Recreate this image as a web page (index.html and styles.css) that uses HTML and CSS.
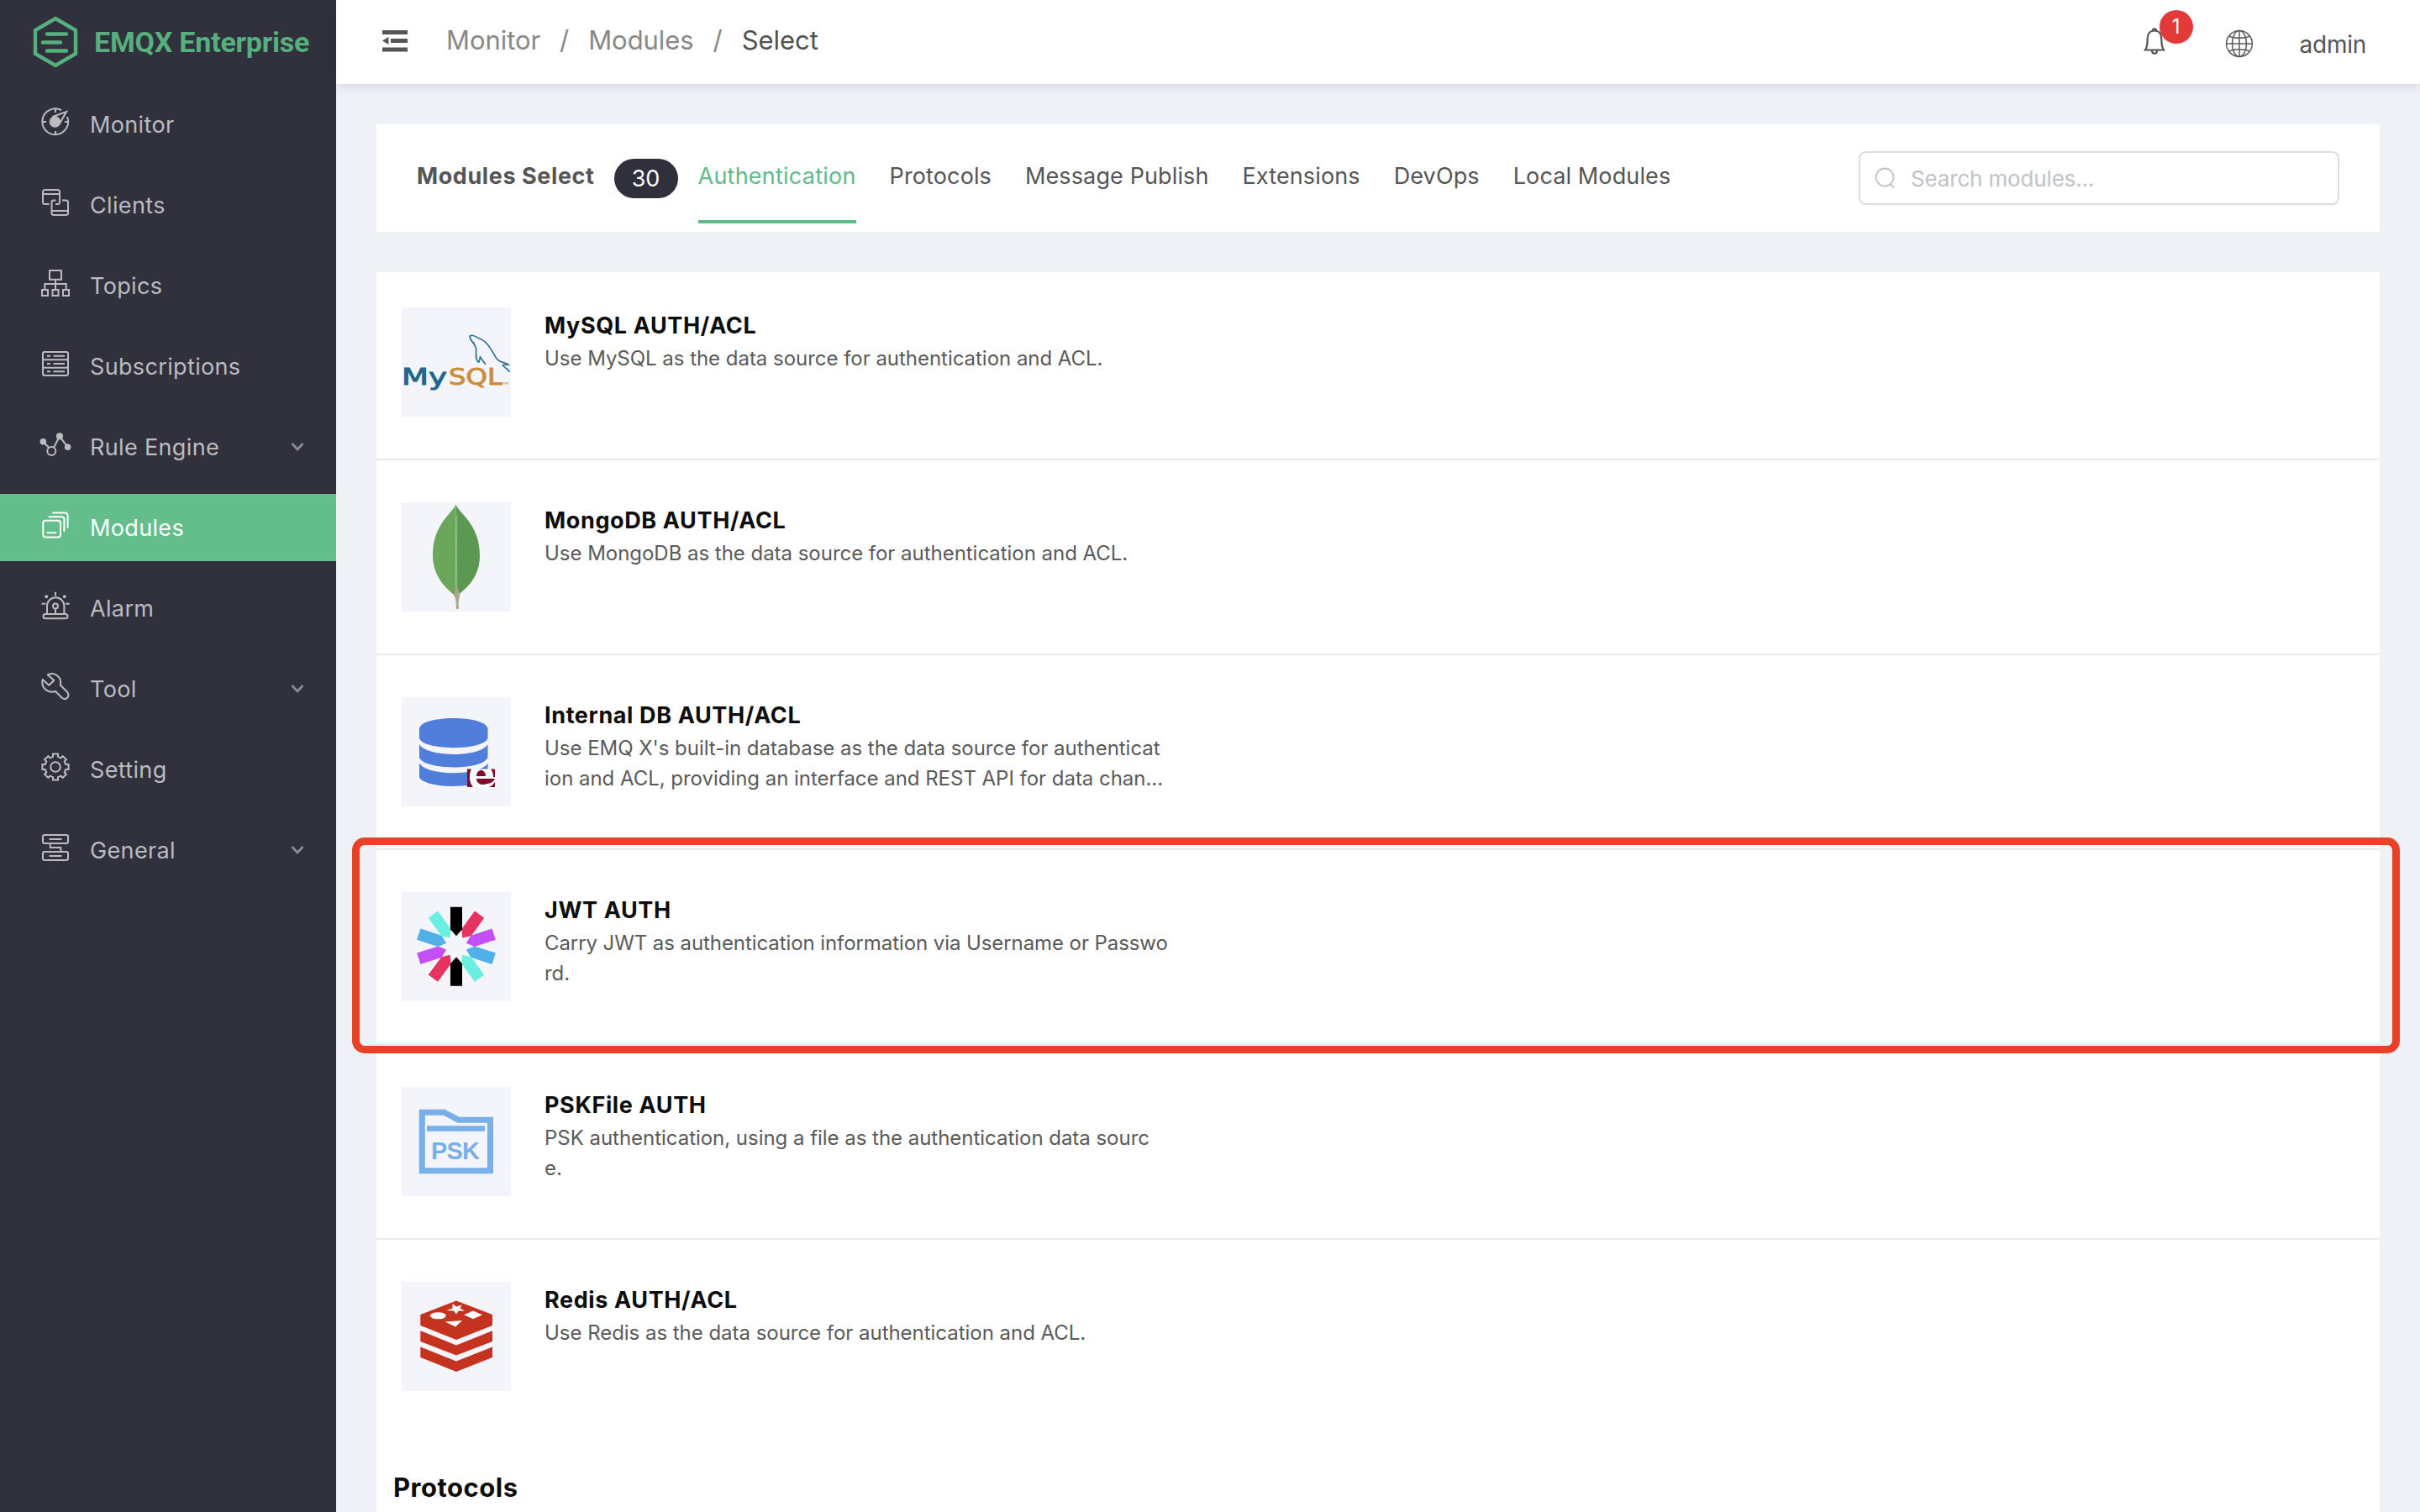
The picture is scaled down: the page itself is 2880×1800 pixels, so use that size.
FILE: index.html
```html
<!DOCTYPE html>
<html lang="en">
<head>
<meta charset="utf-8">
<title>EMQX Enterprise - Modules</title>
<link rel="stylesheet" href="styles.css">
</head>
<body>
<div class="app">
  <aside class="sidebar">
    <div class="brand">
      <svg class="brand-mark" viewBox="0 0 54 62"><path d="M27 3 L51 17 V45 L27 59 L3 45 V17 Z"/><path d="M17 21.5 H40 M12 31.5 H33 M17 41.5 H40" stroke-linecap="round"/></svg>
      <span class="brand-name">EMQX Enterprise</span>
    </div>
    <nav class="menu">
      <a class="menu-item"><svg class="icon" viewBox="0 0 36 36"><path d="M25 4.2 A15.4 15.4 0 1 0 32 12"/><path d="M18 2.5 V7 M18 29 V33.5 M2.5 18 H7 M29 18 H33.5"/><circle class="solid" cx="17.5" cy="18" r="5.8"/><path d="M14.5 12 L31 6 L23 20"/></svg><span class="label">Monitor</span></a>
      <a class="menu-item"><svg class="icon" viewBox="0 0 36 36"><path d="M10.5 20 H5.5 A2.5 2.5 0 0 1 3 17.5 V5.5 A2.5 2.5 0 0 1 5.5 3 H20.5 A2.5 2.5 0 0 1 23 5.5 V17.5 A2.5 2.5 0 0 1 20.5 20 H18 M3 8 H23"/><path d="M18.5 15.5 H16 A2.5 2.5 0 0 0 13.5 18 V30.5 A2.5 2.5 0 0 0 16 33 H30.5 A2.5 2.5 0 0 0 33 30.5 V18 A2.5 2.5 0 0 0 30.5 15.5 H26 M13.5 28 H33"/></svg><span class="label">Clients</span></a>
      <a class="menu-item"><svg class="icon" viewBox="0 0 36 36"><path d="M11 3 H25 V13.7 H11 Z M18 13.7 V26 M5.3 26 V19 H30.7 V26"/><path d="M2 26 H9 V33 H2 Z M14.5 26 H21.5 V33 H14.5 Z M27 26 H34 V33 H27 Z"/></svg><span class="label">Topics</span></a>
      <a class="menu-item"><svg class="icon" viewBox="0 0 36 36"><rect x="3" y="4" width="30" height="28" rx="2"/><path d="M3 13.3 H33 M3 22.7 H33 M8 8.8 H12 M15.5 8.8 H29 M8 18 H12 M15.5 18 H29 M8 27.2 H12 M15.5 27.2 H29"/></svg><span class="label">Subscriptions</span></a>
      <a class="menu-item"><svg class="icon" viewBox="0 0 36 36"><g class="solid"><circle cx="3.3" cy="14.7" r="2.8"/><circle cx="23" cy="8.3" r="3.1"/><circle cx="32.6" cy="21.3" r="2.8"/></g><circle cx="13.3" cy="26" r="5"/><path d="M3.3 14.7 L10.3 22 M16 21.8 L23 8.3 L32.6 21.3"/></svg><span class="label">Rule Engine</span><svg class="chevron" viewBox="0 0 16 12"><path d="M1.5 2 L8 9 L14.5 2"/></svg></a>
      <a class="menu-item active"><svg class="icon" viewBox="0 0 36 36"><rect x="3.3" y="12.8" width="20.7" height="19.7" rx="3"/><path d="M8.5 27.3 H18.5 M10.5 8.2 H25.5 A3 3 0 0 1 28.4 11.2 V25 M15 3.6 H29.5 A3 3 0 0 1 32.6 6.6 V21" stroke-linecap="round"/></svg><span class="label">Modules</span></a>
      <a class="menu-item"><svg class="icon" viewBox="0 0 36 36"><rect x="3.5" y="28" width="29" height="5.3" rx="2.6"/><path d="M8 28 V18.5 A10.2 10.2 0 0 1 28.4 18.5 V28 M18 1.8 V6.5 M1.5 15.8 H6.2 M30 15.8 H34.7 M18 21.5 V28"/><circle cx="18" cy="18.5" r="3"/><circle class="solid" cx="7.2" cy="7.3" r="1"/><circle class="solid" cx="28.8" cy="7.3" r="1"/></svg><span class="label">Alarm</span></a>
      <a class="menu-item"><svg class="icon" viewBox="0 0 36 36"><path d="M8.7 4.3 C17.5 .5 26 7 23.8 16.5 L32 24.8 C36 29.5 30.5 35.5 26 32 L18 24 C9 27 .3 19.5 2.7 10 L10.3 16.8 L16.3 11 Z" stroke-linejoin="round"/></svg><span class="label">Tool</span><svg class="chevron" viewBox="0 0 16 12"><path d="M1.5 2 L8 9 L14.5 2"/></svg></a>
      <a class="menu-item"><svg class="icon" viewBox="0 0 36 36"><circle cx="18" cy="18" r="5.8"/><path transform="translate(18 18)" d="M-3 -12.2 V-15.6 H3 V-12.2 L6.5 -10.7 L8.7 -12.9 L12.9 -8.7 L10.7 -6.5 L12.2 -3 H15.6 V3 H12.2 L10.7 6.5 L12.9 8.7 L8.7 12.9 L6.5 10.7 L3 12.2 V15.6 H-3 V12.2 L-6.5 10.7 L-8.7 12.9 L-12.9 8.7 L-10.7 6.5 L-12.2 3 H-15.6 V-3 H-12.2 L-10.7 -6.5 L-12.9 -8.7 L-8.7 -12.9 L-6.5 -10.7 Z"/></svg><span class="label">Setting</span></a>
      <a class="menu-item"><svg class="icon" viewBox="0 0 36 36"><rect x="3" y="3" width="30" height="10" rx="2"/><rect x="3" y="23" width="30" height="10" rx="2"/><path d="M10.5 8 H25.5 M10.5 28 H25.5 M11.8 13 V18 H24.3 V23"/></svg><span class="label">General</span><svg class="chevron" viewBox="0 0 16 12"><path d="M1.5 2 L8 9 L14.5 2"/></svg></a>
    </nav>
  </aside>

  <div class="main">
    <header class="topbar">
      <svg class="collapse" viewBox="0 0 30 26"><path d="M0 0 H30 V5 H0 Z M10 10 H30 V15 H10 Z M0 20.5 H30 V25.5 H0 Z M0 12.5 L7.5 8 V17 Z"/></svg>
      <div class="crumbs">
        <span>Monitor</span><span class="slash">/</span><span>Modules</span><span class="slash">/</span><span class="current">Select</span>
      </div>
      <div class="tools">
        <div class="bell"><svg viewBox="0 0 28 34"><path d="M3 27.5 C6 23 5.5 18 5.7 14 C5.8 7 9.5 4.5 14 4.5 C18.5 4.5 22.2 7 22.3 14 C22.5 18 22 23 25 27.5 Z"/><path d="M11.8 4.5 C11.5 1.5 16.5 1.5 16.2 4.5 M11 28 C11 33 17 33 17 28"/></svg><span class="count">1</span></div>
        <svg class="globe" viewBox="0 0 34 34"><circle cx="17" cy="17" r="15.4"/><ellipse cx="17" cy="17" rx="8.5" ry="15.4"/><path d="M17 1.6 V32.4 M1.6 17 H32.4 M4.5 8 C11 11 23 11 29.5 8 M4.5 26 C11 23 23 23 29.5 26"/></svg>
        <span class="user">admin</span>
      </div>
    </header>

    <section class="tabs-card">
      <h1 class="tabs-title">Modules Select</h1>
      <span class="total">30</span>
      <div class="tabs">
        <a class="tab active">Authentication</a>
        <a class="tab">Protocols</a>
        <a class="tab">Message Publish</a>
        <a class="tab">Extensions</a>
        <a class="tab">DevOps</a>
        <a class="tab">Local Modules</a>
      </div>
      <div class="search"><svg viewBox="0 0 24 26"><circle cx="12" cy="12" r="10.5"/><path d="M18.5 20 L23 24.5"/></svg><span>Search modules...</span></div>
    </section>

    <section class="list">
      <article class="module">
        <svg class="logo" viewBox="0 0 130 130">
          <path class="dolphin" d="M92 65.5 C87 63 89 54 88.5 49 C88 44 82 40 81 35 C81 32 88 33.5 91 36.5 C102 39 108 53 113 61 C117 66 124 65.5 127 68 L120.5 68.5 C122 73 128 73 128 77 M92 65.5 L93.5 59 L100 68"/><circle cx="86" cy="42" r="1" fill="#3a7090"/>
          <text class="mysql-my" x="0" y="92" textLength="54" lengthAdjust="spacingAndGlyphs">My</text><text class="mysql-sql" x="56" y="92" textLength="64" lengthAdjust="spacingAndGlyphs">SQL</text><text class="mysql-tm" x="121" y="92">TM</text>
        </svg>
        <div class="info"><h2>MySQL AUTH/ACL</h2><p>Use MySQL as the data source for authentication and ACL.</p></div>
      </article>
      <article class="module">
        <svg class="logo" viewBox="0 0 130 130">
          <path fill="#6ba75b" d="M64.5 2.5 C62 12 37 25 37 63 C37 90 55 104 64.5 112 Z"/><path fill="#5b9953" d="M64.5 2.5 C68 13 93 26 93 63 C93 92 74 104 65.5 112 Z"/><path fill="#86b973" d="M65 15 H66.2 V100 H64.5 Z"/><path fill="#aea58f" d="M64.5 97 L69.5 110 C67.5 115 67.5 121 68 127 H65 C65 121 64.5 115 62.5 111 Z"/>
        </svg>
        <div class="info"><h2>MongoDB AUTH/ACL</h2><p>Use MongoDB as the data source for authentication and ACL.</p></div>
      </article>
      <article class="module">
        <svg class="logo" viewBox="0 0 130 130">
          <g fill="#527edb"><path d="M21 38 C21 20.5 102.5 20.5 102.5 38 V48.5 C99 64 24 64 21 48.5 Z"/><path d="M21 56 C30 72 94 72 102.5 56 V71.5 C98 87.5 26 87.5 21 71.5 Z"/><path d="M21 78.5 C30 94 94 94 102.5 78.5 V95 C98 109.5 26 109.5 21 95 Z"/></g>
          <rect x="78" y="85.5" width="33" height="21.5" fill="#fff"/>
          <path fill="#7f0d2e" d="M78 85.5 H83 C80 92 80 101 85 107 H78 Z M111 85.5 H106 C108 88 109 92 109 95 H111 Z M111 101 V107 H104 C107 106 109 104 111 101 Z M89 94 C89 84.5 100 84.5 100 94 Z M89 97 H111 C109 101 106 102.5 102 103 C94 106 89 102 89 97 Z"/>
        </svg>
        <div class="info"><h2>Internal DB AUTH/ACL</h2><p>Use EMQ X's built-in database as the data source for authenticat<br>ion and ACL, providing an interface and REST API for data chan...</p></div>
      </article>
      <article class="module highlighted">
        <svg class="logo" viewBox="0 0 130 130">
          <defs><path id="ray" d="M-7 -47 H7 V-20.5 L0 -12.5 L-7 -20.5 Z"/></defs>
          <g transform="translate(65 64.7)">
            <use href="#ray" fill="#c24ff8" transform="rotate(72)"/><use href="#ray" fill="#4fb1e8" transform="rotate(108)"/><use href="#ray" fill="#c24ff8" transform="rotate(252)"/><use href="#ray" fill="#4fb1e8" transform="rotate(288)"/>
            <use href="#ray" fill="#e5345f" transform="rotate(36)"/><use href="#ray" fill="#6cefe1" transform="rotate(144)"/><use href="#ray" fill="#e5345f" transform="rotate(216)"/><use href="#ray" fill="#6cefe1" transform="rotate(324)"/>
            <use href="#ray"/><use href="#ray" transform="rotate(180)"/>
          </g>
        </svg>
        <div class="info"><h2>JWT AUTH</h2><p><span class="tight">Carry JWT as authentication information via Username or Passwo</span><br>rd.</p></div>
      </article>
      <article class="module">
        <svg class="logo" viewBox="0 0 130 130">
          <path d="M24.3 30.2 H50.5 L67.5 39.2 H105.5 V99.7 H24.3 Z" fill="none" stroke="#79afe8" stroke-width="7"/><path d="M30 46.3 H99 V52.7 H30 Z" fill="#79afe8"/>
          <text class="psk" x="35" y="85.5" textLength="58" lengthAdjust="spacing">PSK</text>
        </svg>
        <div class="info"><h2>PSKFile AUTH</h2><p>PSK authentication, using a file as the authentication data sourc<br>e.</p></div>
      </article>
      <article class="module">
        <svg class="logo" viewBox="0 0 130 130">
          <g fill="#c5321f"><path d="M65 22.4 L108 39 V52 L65 69 L22.3 52 V39 Z"/><path d="M22.3 58.2 L65 75.4 L108 58.2 V71 L65 87.5 L22.3 71 Z"/><path d="M22.3 77.5 L65 94.4 L108 77.5 V90 L65 107 L22.3 90 Z"/></g>
          <g fill="#fff"><ellipse cx="43.4" cy="40.3" rx="9.5" ry="4"/><path d="M74 39.3 L85 34.5 L96 39.3 L85 44.3 Z M51.7 47.5 L72 46 L64 53.5 Z M60.5 26 L65 29.5 L71.5 27.5 L69.5 31.5 L75 34.5 L67.5 34.5 L65 38.5 L62 34.5 L53.5 34 L60.5 31.5 Z"/></g>
        </svg>
        <div class="info"><h2>Redis AUTH/ACL</h2><p>Use Redis as the data source for authentication and ACL.</p></div>
      </article>
      <h2 class="group-title">Protocols</h2>
    </section>
  </div>
</div>
</body>
</html>
```
FILE: styles.css
```css
*, *::after { box-sizing: border-box; }
body { margin: 0; font-family: Inter, "Liberation Sans", sans-serif; background: #f0f1f6; color: #555; }
h1, h2, p { margin: 0; }
.app { display: flex; width: 2880px; height: 1800px; overflow: hidden; }

/* Sidebar */
.sidebar { width: 400px; flex: none; background: #30313d; color: #bcbcc0; }
.brand { display: flex; align-items: center; height: 100px; padding-left: 39px; }
.brand-mark { width: 54px; height: 62px; fill: none; stroke: #55b07e; stroke-width: 4.4; }
.brand-name { margin-left: 19px; font: 700 34px/40px Roboto, sans-serif; letter-spacing: -.2px; color: #55b07e; }
.menu { display: flex; flex-direction: column; gap: 16px; padding-top: 8px; }
.menu-item { display: flex; align-items: center; height: 80px; padding: 0 38px 0 48px; }
.menu-item.active { background: #63be8c; color: #fff; }
.icon { width: 36px; height: 36px; margin-bottom: 6px; fill: none; stroke: currentColor; stroke-width: 2; overflow: visible; }
.solid { fill: currentColor; }
.label { margin-left: 23px; padding-top: 1px; font-size: 27px; line-height: 36px; letter-spacing: .35px; }
.chevron { width: 16px; height: 12px; margin-left: auto; fill: none; stroke: #8d8e95; stroke-width: 2.6; }

/* Top bar */
.main { flex: 1; min-width: 0; display: flex; flex-direction: column; }
.topbar { flex: none; display: flex; height: 100px; padding: 0 64px 0 55px; background: #fff; box-shadow: 0 2px 12px rgba(0, 21, 41, .12); }
.collapse { width: 30px; height: 26px; margin-top: 36px; fill: #555; }
.crumbs { display: flex; margin: 28px 0 0 46px; font-size: 31px; line-height: 40px; letter-spacing: -.05px; color: #888; }
.slash { width: 57px; text-align: center; }
.current { color: #505050; }
.tools { display: flex; margin-left: auto; }
.bell { position: relative; width: 28px; height: 34px; margin: 32px 70px 0 0; }
.bell svg { width: 28px; height: 34px; fill: none; stroke: #555; stroke-width: 2.2; }
.count { position: absolute; left: 20px; top: -20px; width: 40px; height: 40px; border-radius: 20px; background: #e23a39; color: #fff; font-size: 24px; line-height: 40px; text-align: center; }
.globe { width: 34px; height: 34px; margin-top: 35px; fill: none; stroke: #5c5c5c; stroke-width: 1.5; }
.user { margin: 33px 0 0 55px; font-size: 28px; line-height: 40px; letter-spacing: -.25px; }

/* Tabs */
.tabs-card { flex: none; display: flex; height: 128px; margin: 48px 48px 0; padding: 0 48px; background: #fff; }
.tabs-title { margin-top: 44px; font-size: 27px; line-height: 36px; font-weight: 700; letter-spacing: .58px; }
.total { width: 76px; height: 47px; margin: 41px 24px 0 23px; border-radius: 24px; background: #2f303c; color: #fff; font-size: 27px; line-height: 47px; text-align: center; }
.tabs { display: flex; gap: 40px; }
.tab { height: 118px; padding-top: 44px; font-size: 27px; line-height: 36px; letter-spacing: .12px; }
.tab.active { letter-spacing: .23px; color: #62b98a; border-bottom: 4px solid #62b98a; }
.search { display: flex; width: 572px; height: 64px; margin: 32px 0 0 auto; padding-left: 17px; border: 2px solid #dcdcdf; border-radius: 8px; align-items: center; color: #c0c2c9; font-size: 26px; letter-spacing: -.16px; }
.search svg { width: 24px; height: 26px; margin-right: 19px; fill: none; stroke: #c0c2c9; stroke-width: 1.8; }

/* Module list */
.list { flex: 1; margin: 48px 48px 0; background: #fff; }
.module { position: relative; display: flex; height: 232px; padding: 50px 30px 0; }
.module:first-child { height: 224px; padding-top: 42px; }
.module:not(:nth-child(6)) { border-bottom: 2px solid #ebebed; }
.logo { width: 130px; height: 130px; background: #f4f5fb; }
.info { margin-left: 39px; padding-top: 2px; }
.info h2 { padding-left: 1px; font-size: 27px; line-height: 40px; letter-spacing: .62px; color: #0d0d0d; }
.info p { margin: 1px 0 0 1px; font-size: 24px; line-height: 36px; letter-spacing: -.03px; color: #5a5a5a; white-space: nowrap; }
.tight { letter-spacing: -.08px; }
.highlighted::after { content: ""; position: absolute; left: -29px; top: -15px; width: 2437px; height: 257px; border: 9px solid #e94028; border-radius: 15px; }
.group-title { margin: 41px 0 0 20px; font-size: 31px; line-height: 44px; letter-spacing: .5px; color: #0d0d0d; }

/* Lettering inside the logos */
.dolphin { fill: none; stroke: #2f7195; stroke-width: 1.7; }
.mysql-my, .mysql-sql { font: 26px "DejaVu Sans", sans-serif; fill: #22668c; stroke: #22668c; stroke-width: .9; }
.mysql-sql { fill: #cc8d3c; stroke: #cc8d3c; }
.mysql-tm { font: 4px "DejaVu Sans", sans-serif; fill: #cc8d3c; }
.psk { font: 700 29px "Liberation Sans", sans-serif; fill: #79afe8; }
```
